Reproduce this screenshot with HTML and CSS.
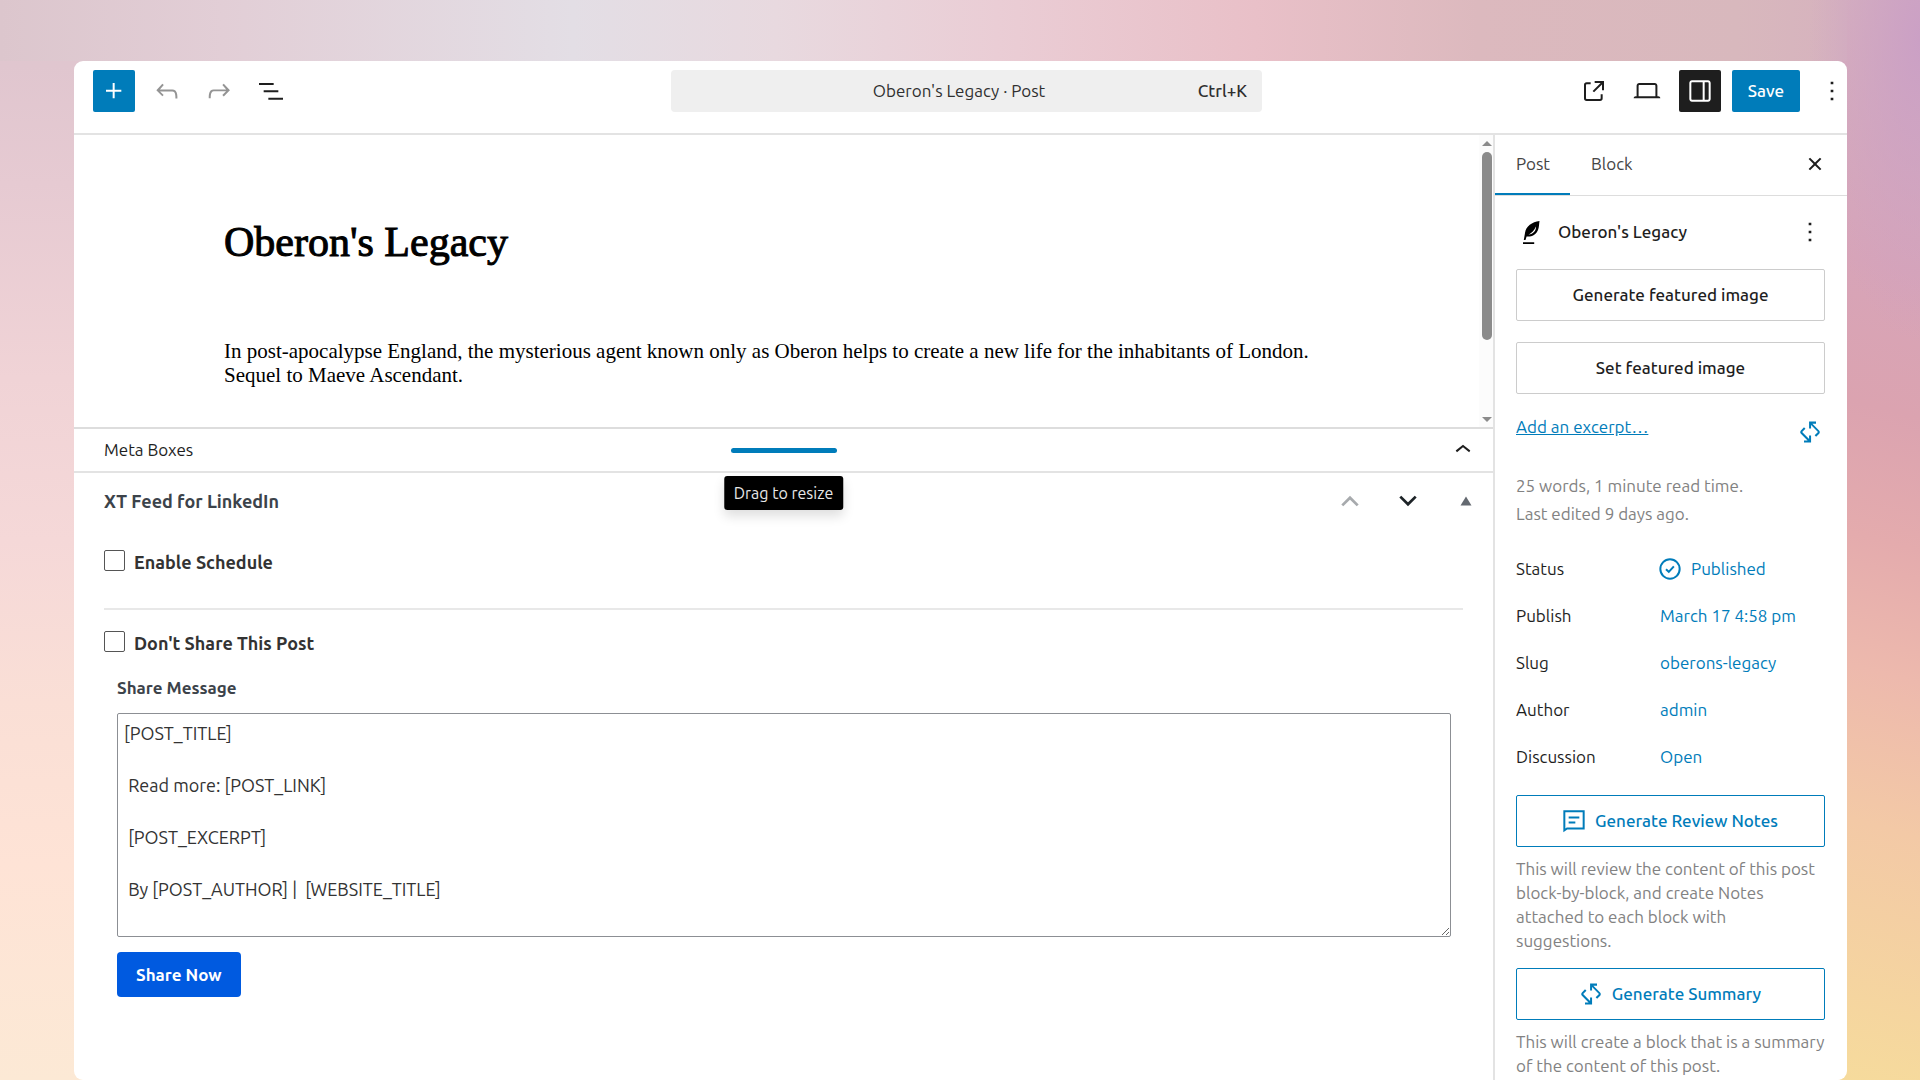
FILE: index.html
```html
<!DOCTYPE html>
<html lang="en">
<head>
<meta charset="utf-8">
<title>Oberon's Legacy</title>
<link rel="stylesheet" href="styles.css">
</head>
<body>
<div class="window">
  <header class="toolbar">
    <div class="tools">
      <button class="icon-btn primary" aria-label="Add block"><svg class="icon" viewBox="0 0 24 24"><path d="M11 12.5V17.5H12.5V12.5H17.5V11H12.5V6H11V11H6V12.5H11Z"/></svg></button>
      <button class="icon-btn faded" aria-label="Undo"><svg class="icon" viewBox="0 0 24 24"><path d="M18.3 11.7c-.6-.6-1.4-.9-2.3-.9H6.7l2.9-3.3-1.1-1-4.5 5L8.5 16l1-1-2.7-2.7H16c.5 0 .9.2 1.3.5 1 1 1 3.4 1 4.500v.3h1.500v-.2c0-1.500 0-4.300-1.500-5.700z"/></svg></button>
      <button class="icon-btn faded" aria-label="Redo"><svg class="icon" viewBox="0 0 24 24"><path d="M15.6 6.500l-1.100 1 2.900 3.300H8c-.9 0-1.700.3-2.300.9-1.400 1.500-1.400 4.200-1.400 5.600v.2h1.500v-.3c0-1.100 0-3.500 1-4.500.3-.3.7-.5 1.300-.5h9.200L14.500 15l1.100 1.100 4.600-4.600-4.600-5z"/></svg></button>
      <button class="icon-btn" aria-label="Document overview"><svg class="icon" viewBox="0 0 24 24"><path d="M3 6h11v1.500H3V6Zm3.500 5.500h11V13h-11v-1.500ZM21 17H10v1.500h11V17Z"/></svg></button>
    </div>
    <button class="command"><span>Oberon's Legacy · Post</span><kbd>Ctrl+K</kbd></button>
    <div class="actions">
      <button class="icon-btn" aria-label="View post"><svg class="icon" viewBox="0 0 24 24"><path d="M19.500 4.500h-7V6h4.440l-5.970 5.970 1.060 1.060L18 7.060v4.440h1.500v-7Zm-13 1a2 2 0 0 0-2 2v10a2 2 0 0 0 2 2h10a2 2 0 0 0 2-2v-3H17v3a.5.5 0 0 1-.5.5h-10a.5.5 0 0 1-.5-.5v-10a.5.5 0 0 1 .5-.5h3V5.500h-3Z"/></svg></button>
      <button class="icon-btn" aria-label="Preview"><svg class="icon" viewBox="0 0 24 24"><path d="M20.500 16h-.7V8c0-1.100-.9-2-2-2H6.200c-1.100 0-2 .9-2 2v8h-.7c-.8 0-1.500.7-1.500 1.500h20c0-.8-.7-1.500-1.500-1.500zM5.700 8c0-.3.2-.5.500-.5h11.600c.3 0 .5.2.5.500v8H5.700V8z"/></svg></button>
      <button class="icon-btn pressed" aria-label="Settings"><svg class="icon" viewBox="0 0 24 24"><path fill-rule="evenodd" d="M18 4H6c-1.100 0-2 .9-2 2v12c0 1.100.9 2 2 2h12c1.100 0 2-.9 2-2V6c0-1.100-.9-2-2-2zm-4 14.500H6c-.3 0-.5-.2-.5-.5V6c0-.3.2-.5.500-.5h8v13zm4.500-.5c0 .3-.2.5-.5.5h-2.500v-13H18c.3 0 .5.2.5.500v12z"/></svg></button>
      <button class="save">Save</button>
      <button class="icon-btn more" aria-label="Options"><svg class="icon" viewBox="0 0 24 24"><path d="M13 19h-2v-2h2v2zm0-6h-2v-2h2v2zm0-6h-2V5h2v2z"/></svg></button>
    </div>
  </header>

  <div class="body">
    <main class="main">
      <section class="canvas">
        <div class="post">
          <h1>Oberon's Legacy</h1>
          <p>In post-apocalypse England, the mysterious agent known only as Oberon helps to create a new life for the inhabitants of London. Sequel to Maeve Ascendant.</p>
        </div>
        <div class="scrollbar" aria-hidden="true"><i class="up"></i><i class="thumb"></i><i class="down"></i></div>
      </section>
      <section class="meta-head">
        <h2>Meta Boxes</h2>
        <div class="resizer"><button class="handle" aria-label="Drag to resize"></button><span class="tooltip">Drag to resize</span></div>
        <button class="icon-btn fold" aria-label="Collapse"><svg class="icon" viewBox="0 0 24 24"><path d="M6.500 12.400 12 8l5.500 4.400-.9 1.200L12 10l-4.500 3.600-1-1.200z"/></svg></button>
      </section>
      <section class="meta-box">
        <div class="box-head">
          <h2>XT Feed for LinkedIn</h2>
          <div class="order">
            <button class="order-btn dim" aria-label="Move up"><svg viewBox="0 0 20 20"><path d="M3 14l7-7 7 7"/></svg></button>
            <button class="order-btn" aria-label="Move down"><svg viewBox="0 0 20 20"><path d="M3 6l7 7 7-7"/></svg></button>
            <button class="order-btn toggle" aria-label="Toggle panel"><svg viewBox="0 0 20 20"><path d="M5 14l5-8 5 8z"/></svg></button>
          </div>
        </div>
        <label class="check"><input type="checkbox"><span>Enable Schedule</span></label>
        <hr>
        <label class="check"><input type="checkbox"><span>Don't Share This Post</span></label>
        <form class="share">
          <label for="message">Share Message</label>
          <textarea id="message">[POST_TITLE]

 Read more: [POST_LINK]

 [POST_EXCERPT]

 By [POST_AUTHOR] |  [WEBSITE_TITLE]</textarea>
          <button type="button" class="share-now">Share Now</button>
        </form>
      </section>
    </main>

    <aside class="sidebar">
      <div class="tabs">
        <button class="tab active">Post</button>
        <button class="tab">Block</button>
        <button class="icon-btn close" aria-label="Close settings"><svg class="icon" viewBox="0 0 24 24"><path d="M12 13.060l3.712 3.713 1.061-1.060L13.061 12l3.712-3.712-1.060-1.060L12 10.938 8.288 7.227l-1.061 1.060L10.939 12l-3.712 3.712 1.060 1.061L12 13.061z"/></svg></button>
      </div>
      <div class="panel">
        <div class="card">
          <svg class="quill" viewBox="0 0 17 23"><path d="M16.500 0C9 1 3 5 2 12L.8 19h1.700l1.100-3.500C8.500 16 13 14 15 9c1.200-3 1-6 1.500-9z"/><path class="vein" d="M12.800 5.500C13.500 9 10.500 13 5.500 13.800 8.500 12 11.500 9.500 12.800 5.500z"/><path d="M0 21.200h11.200V23H0z"/></svg>
          <h2>Oberon's Legacy</h2>
          <button class="icon-btn" aria-label="Actions"><svg class="icon" viewBox="0 0 24 24"><path d="M13 19h-2v-2h2v2zm0-6h-2v-2h2v2zm0-6h-2V5h2v2z"/></svg></button>
        </div>
        <button class="wide">Generate featured image</button>
        <button class="wide">Set featured image</button>
        <div class="excerpt">
          <a href="#">Add an excerpt…</a>
          <button class="icon-btn blue" aria-label="Generate excerpt"><svg class="icon" viewBox="0 0 24 24"><path d="m11.300 17.200-5-5c-.1-.1-.1-.3 0-.4l2.300-2.300-1.100-1-2.300 2.300c-.7.7-.7 1.800 0 2.500l5 5H7.500v1.500h5.300v-5.200h-1.500v2.600zm7.500-6.400-5-5h2.700V4.200h-5.200v5.200h1.500V6.800l5 5c.1.1.1.3 0 .4l-2.300 2.300 1.100 1.100 2.300-2.300c.6-.7.6-1.900-.1-2.500z"/></svg></button>
        </div>
        <p class="stats">25 words, 1 minute read time.<br>Last edited 9 days ago.</p>
        <dl class="facts">
          <dt>Status</dt><dd><a href="#"><svg class="icon" viewBox="0 0 24 24"><circle class="line" cx="12" cy="12" r="7.250"/><path class="line" d="M9 12.200l2.100 2 3.800-4.200"/></svg>Published</a></dd>
          <dt>Publish</dt><dd><a href="#">March 17 4:58 pm</a></dd>
          <dt>Slug</dt><dd><a href="#">oberons-legacy</a></dd>
          <dt>Author</dt><dd><a href="#">admin</a></dd>
          <dt>Discussion</dt><dd><a href="#">Open</a></dd>
        </dl>
        <button class="wide blue"><svg class="icon" viewBox="0 0 24 24"><path class="line" d="M4.750 4.750h14.500v12.800H6.800l-2.050 1.400z"/><path class="line" d="M8 9.300h8M8 13.100h5"/></svg>Generate Review Notes</button>
        <p class="help">This will review the content of this post block-by-block, and create Notes attached to each block with suggestions.</p>
        <button class="wide blue"><svg class="icon" viewBox="0 0 24 24"><path d="m11.300 17.200-5-5c-.1-.1-.1-.3 0-.4l2.300-2.300-1.100-1-2.300 2.300c-.7.7-.7 1.800 0 2.500l5 5H7.500v1.500h5.300v-5.200h-1.500v2.600zm7.500-6.400-5-5h2.700V4.200h-5.200v5.200h1.500V6.800l5 5c.1.1.1.3 0 .4l-2.300 2.300 1.100 1.100 2.300-2.300c.6-.7.6-1.900-.1-2.500z"/></svg>Generate Summary</button>
        <p class="help">This will create a block that is a summary of the content of this post.</p>
      </div>
    </aside>
  </div>
</div>
</body>
</html>
```
FILE: styles.css
```css
* { box-sizing: border-box; }

body {
  margin: 0;
  min-height: 100vh;
  display: flex;
  padding: 61px 73px 0 74px;
  font: 17px/24px "Ubuntu", "Noto Sans", sans-serif;
  color: #1e1e1e;
  background:
    radial-gradient(ellipse 110px 300px at 100% 40px, #cba0c5, transparent) no-repeat,
    linear-gradient(90deg, #dcc6cd, #e2ced6 12%, #e3dee5 31%, #e8d9df 42%, #eacdd5 54%, #e9c0c8 68%, #dcb9be 80%, #d8b8bd 94%, #d6b2be) left top / calc(100% - 73px) 61px no-repeat,
    linear-gradient(195deg, #d6b2be, #d7a4b8 25%, #dba3b0 38%, #e4abad 50%, #edb9ad 62%, #f3c9a6 76%, #f6db9c) right top / 80px 100% no-repeat,
    linear-gradient(180deg, #dcc6cd, #e0c6cf 6%, #e6cad2 17%, #f0d3d6 35%, #f5d8d8 50%, #fadfd6 65%, #fee3d6 80%, #fce9d5);
}

h1, h2, p, dl, dd { margin: 0; }
button, textarea, kbd { font: inherit; color: inherit; }
button { border: 0; padding: 0; background: none; cursor: pointer; }
a { color: #007cba; text-decoration: none; }
svg { display: block; fill: currentColor; }
.icon { width: 32px; height: 32px; flex: none; }
.line { fill: none; stroke: currentColor; stroke-width: 1.5; }

.window {
  flex: 1;
  min-width: 0;
  display: flex;
  flex-direction: column;
  background: #fff;
  border-radius: 9px;
  overflow: hidden;
}

/* Top toolbar */
.toolbar {
  display: grid;
  grid-template-columns: 1fr minmax(0, 591px) 1fr;
  padding: 9px 0 21px 12px;
  border-bottom: 2px solid #e3e3e3;
}
.tools, .actions { display: flex; gap: 10px; }
.tools { padding-left: 7px; }
.actions { justify-content: flex-end; gap: 11px; }
.icon-btn {
  width: 42px;
  height: 42px;
  display: grid;
  place-items: center;
  border-radius: 2px;
}
.primary, .save { background: #007cba; color: #fff; }
.primary { margin-right: 1px; }
.faded { color: #949494; }
.pressed { background: #1e1e1e; color: #fff; }
.save { padding: 0 16px; border-radius: 2px; font-weight: 500; }
.more { margin-right: -6px; }
.command {
  display: grid;
  grid-template-columns: 1fr auto 1fr;
  align-items: center;
  padding: 0 15px 0 0;
  background: #efefef;
  border-radius: 4px;
  color: #2f2f2f;
}
.command span { grid-column: 2; }
.command kbd { justify-self: end; font-weight: 500; }

.body { flex: 1; display: flex; }
.main { flex: 1; min-width: 0; display: flex; flex-direction: column; }

/* Editor canvas */
.canvas {
  display: flex;
  justify-content: space-between;
  height: 292px;
  font: 21px/24px "Liberation Serif", serif;
  color: #000;
}
.post { padding: 83px 0 0 150px; max-width: 1250px; }
.post h1 { font-size: 42px; line-height: 48px; font-weight: 400; -webkit-text-stroke: 1px currentColor; }
.post p { margin-top: 73px; }
.scrollbar {
  width: 14px;
  padding: 6px 1px 5px 3px;
  display: flex;
  flex-direction: column;
  align-items: center;
  background: #fcfcfc;
  color: #8b8b8b;
}
.up, .down { border: 5px solid transparent; }
.up { border-top: 0; border-bottom-color: currentColor; }
.down { border-bottom: 0; border-top-color: currentColor; margin-top: auto; }
.thumb { width: 10px; height: 188px; margin-top: 6px; border-radius: 5px; background: currentColor; }

/* Meta boxes */
.meta-head {
  display: grid;
  grid-template-columns: 1fr auto 1fr;
  align-items: center;
  height: 46px;
  border-top: 2px solid #ddd;
  border-bottom: 2px solid #e3e3e3;
}
h2 { font-size: 17px; line-height: 24px; font-weight: 400; }
.meta-head h2 { padding-left: 30px; }
.resizer { position: relative; }
.handle { display: block; width: 106px; height: 5px; border-radius: 3px; background: #007cba; }
.tooltip {
  position: absolute;
  top: 28px;
  left: 50%;
  transform: translateX(-50%);
  padding: 5px 10px;
  background: #000;
  color: #e8e8e8;
  border-radius: 3px;
  font-size: 16px;
  white-space: nowrap;
  box-shadow: 0 6px 12px #0002;
}
.fold { justify-self: end; margin-right: 9px; }
.meta-box { padding: 10px 30px 40px; }
.box-head { display: flex; justify-content: space-between; align-items: center; height: 36px; margin-right: -15px; }
.box-head h2 { color: #3c434a; font-size: 18px; font-weight: 600; }
.order { display: flex; gap: 34px; }
.order-btn { width: 24px; height: 24px; display: grid; place-items: center; color: #1d2327; }
.order-btn svg { width: 22px; height: 22px; }
.order-btn path { fill: none; stroke: currentColor; stroke-width: 2.5; }
.order-btn.toggle path { fill: currentColor; stroke: none; }
.order-btn.dim { color: #a7aaad; }
.order-btn.toggle { color: #646970; }
.check { display: flex; gap: 9px; font-size: 18px; font-weight: 600; color: #333; margin-top: 31px; }
.check input {
  appearance: none;
  width: 21px;
  height: 21px;
  margin: 0;
  border: 1px solid #555;
  border-radius: 2px;
}
hr { margin: 34px 0 -10px; border: 0; border-top: 2px solid #e8e8e8; }
.share { padding: 21px 12px 0 13px; }
.share label { display: block; font-weight: 600; color: #3c434a; }
.share textarea {
  display: block;
  width: 100%;
  height: 224px;
  margin: 13px 0 15px;
  padding: 6px;
  border: 1px solid #8c8f94;
  border-radius: 2px;
  font-size: 18px;
  line-height: 26px;
  color: #333;
}
.share-now { height: 45px; padding: 0 19px; border-radius: 4px; background: #005ae0; color: #fff; font-weight: 600; }

/* Settings sidebar */
.sidebar { width: 354px; border-left: 2px solid #e3e3e3; }
.tabs { display: flex; height: 61px; border-bottom: 1px solid #ddd; }
.tab { padding: 0 20px 2px 21px; color: #444; }
.tab.active { border-bottom: 2px solid #007cba; padding-bottom: 0; }
.close { margin: 8px 11px 0 auto; }
.panel { padding: 15px 22px 0 21px; }
.card { display: flex; align-items: center; height: 42px; }
.card h2 { flex: 1; margin-left: 18px; font-weight: 500; }
.card .icon-btn, .excerpt .icon-btn { margin-right: -6px; }
.quill { width: 17px; height: 23px; margin-left: 7px; fill: #000; }
.vein { fill: #fff; }
.wide {
  width: 100%;
  height: 52px;
  display: flex;
  align-items: center;
  justify-content: center;
  gap: 5px;
  border: 1px solid #ccc;
  border-radius: 2px;
  font-weight: 500;
}
.card + .wide { margin-top: 16px; }
.wide + .wide { margin-top: 21px; }
.blue { color: #007cba; }
.wide.blue { border-color: #007cba; padding-right: 5px; }
.excerpt { display: flex; justify-content: space-between; height: 42px; margin-top: 17px; }
.excerpt a { padding-top: 4px; text-decoration: underline; }
.stats { margin-top: 19px; line-height: 28px; color: #828282; }
.facts { display: grid; grid-template-columns: 144px 1fr; grid-auto-rows: 47px; align-items: center; margin-top: 17px; }
.facts a { display: flex; align-items: center; gap: 5px; }
.facts .icon { margin-left: -6px; }
.facts + .wide { margin-top: 15px; }
.help { margin: 10px 0 15px; color: #828282; }
.help:last-child { margin-bottom: 0; }
```
